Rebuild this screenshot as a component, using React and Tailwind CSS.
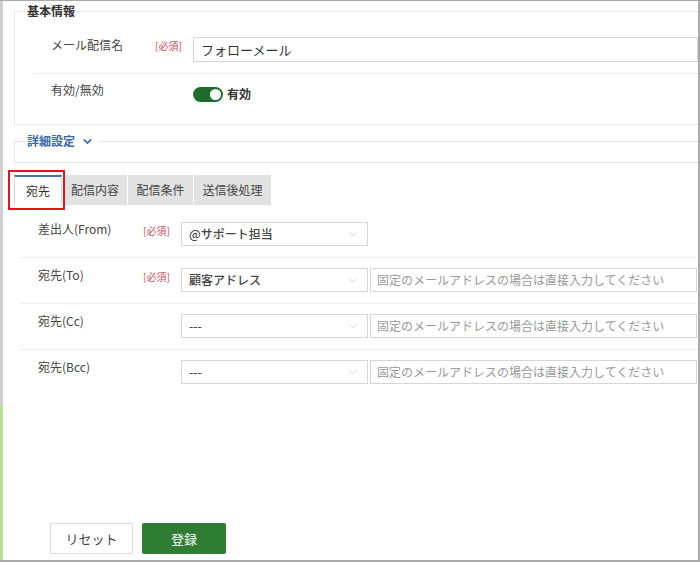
import { ChevronDown } from "lucide-react";

const font = {
  fontFamily: '"Noto Sans CJK JP", "Noto Sans", sans-serif',
};

function Required() {
  return (
    <span className="w-[38px] shrink-0 pt-[2px] text-[10px] leading-[14px] text-[#c8505a]">
      [必須]
    </span>
  );
}

function Select({ value }) {
  return (
    <div className="flex h-[24px] w-[187px] shrink-0 items-center justify-between border border-[#d6d6d6] bg-white pl-[7px] pr-[6px]">
      <span className="text-[12px] font-medium text-[#444]">{value}</span>
      <ChevronDown size={16} strokeWidth={0.9} className="text-[#c4c4c4]" />
    </div>
  );
}

function AddressInput() {
  return (
    <div className="ml-[2px] flex h-[24px] flex-1 items-center border border-[#d6d6d6] bg-white pl-[6px]">
      <span className="text-[12px] text-[#999]">
        固定のメールアドレスの場合は直接入力してください
      </span>
    </div>
  );
}

function AddressRow({ label, required, value, withInput, first }) {
  return (
    <div
      className={
        "flex items-start border-b border-[#eeeeee] pb-[11px] " +
        (first ? "pt-[17px]" : "pt-[10px]")
      }
    >
      <span className="w-[123px] shrink-0 pl-[18px] text-[12px] leading-[14px] text-[#444]">
        {label}
      </span>
      {required ? <Required /> : <span className="w-[38px] shrink-0" />}
      <Select value={value} />
      {withInput && <AddressInput />}
    </div>
  );
}

export default function App() {
  const tabs = ["配信内容", "配信条件", "送信後処理"];
  const tabWidths = ["w-[64px]", "w-[65px]", "w-[77px]"];

  return (
    <div
      className="flex h-[562px] w-[700px] overflow-hidden border-t border-r-2 border-b-2 border-[#aaaaaa] bg-white"
      style={font}
    >
      {/* left edge strip */}
      <div className="flex w-[3px] shrink-0 flex-col">
        <div className="h-[404px] bg-[#cfcfcf]" />
        <div className="flex-1 bg-[#b8e08c]" />
      </div>

      <div className="flex min-w-0 flex-1 flex-col">
        {/* 基本情報 */}
        <fieldset className="ml-[11px] mt-[2px] h-[122px] border border-r-0 border-[#e6e6e6]">
          <legend className="ml-[10px] px-[2px] text-[12px] font-bold leading-[16px] text-[#333]">
            基本情報
          </legend>
          <div className="ml-[18px]">
            <div className="flex items-start border-b border-[#eeeeee] pb-[11px] pt-[18px]">
              <span className="w-[122px] shrink-0 pl-[18px] pt-[1px] text-[12px] leading-[14px] text-[#444]">
                メール配信名
              </span>
              <Required />
              <div className="flex h-[25px] flex-1 items-center border border-[#d6d6d6] bg-white pl-[7px]">
                <span className="text-[13px] text-[#333]">フォローメール</span>
              </div>
            </div>
            <div className="flex items-start pt-[9px]">
              <span className="w-[160px] shrink-0 pl-[18px] text-[12px] leading-[14px] text-[#444]">
                有効/無効
              </span>
              <div className="flex items-center gap-[4px] pt-[2px]">
                <div className="flex h-[15px] w-[30px] items-center justify-end rounded-full bg-[#1f6d2c] pr-[2px]">
                  <div className="h-[11px] w-[11px] rounded-full bg-white" />
                </div>
                <span className="text-[12px] font-bold text-[#333]">有効</span>
              </div>
            </div>
          </div>
        </fieldset>

        {/* 詳細設定 */}
        <fieldset className="ml-[11px] mt-[8px] h-[30px] border border-r-0 border-[#e6e6e6]">
          <legend className="ml-[10px] flex items-center gap-[6px] pl-[2px] pr-[6px] text-[12px] font-bold leading-[16px] text-[#3a67ad]">
            詳細設定
            <ChevronDown size={13} strokeWidth={3} />
          </legend>
        </fieldset>

        {/* tabs */}
        <div className="relative ml-[11px] mt-[12px] flex h-[30px] items-stretch">
          <div className="flex w-[48px] items-center justify-center border-x border-t-2 border-[#d8d8d8] border-t-[#3f72b5] bg-white text-[12px] text-[#333]">
            宛先
          </div>
          {tabs.map((t, i) => (
            <div
              key={t}
              className={
                "ml-[1px] flex items-center justify-center bg-[#e2e2e2] text-[12px] text-[#444] " +
                tabWidths[i]
              }
            >
              {t}
            </div>
          ))}
          <div className="pointer-events-none absolute left-[-6px] top-[-5px] h-[40px] w-[57px] border-2 border-[#e8121b]" />
        </div>

        {/* address rows */}
        <div className="ml-[17px] mr-[1px]">
          <AddressRow label="差出人(From)" required value="@サポート担当" first />
          <AddressRow label="宛先(To)" required value="顧客アドレス" withInput />
          <AddressRow label="宛先(Cc)" value="---" withInput />
          <div className="flex items-start pt-[10px]">
            <span className="w-[123px] shrink-0 pl-[18px] text-[12px] leading-[14px] text-[#444]">
              宛先(Bcc)
            </span>
            <span className="w-[38px] shrink-0" />
            <Select value="---" />
            <AddressInput />
          </div>
        </div>

        {/* buttons */}
        <div className="mt-auto flex gap-[9px] pb-[6px] pl-[47px]">
          <button className="h-[31px] w-[83px] border border-[#dcdcdc] bg-white text-[13px] text-[#444]">
            リセット
          </button>
          <button className="h-[31px] w-[84px] rounded-[2px] bg-[#2e7d32] text-[13px] text-white">
            登録
          </button>
        </div>
      </div>
    </div>
  );
}
